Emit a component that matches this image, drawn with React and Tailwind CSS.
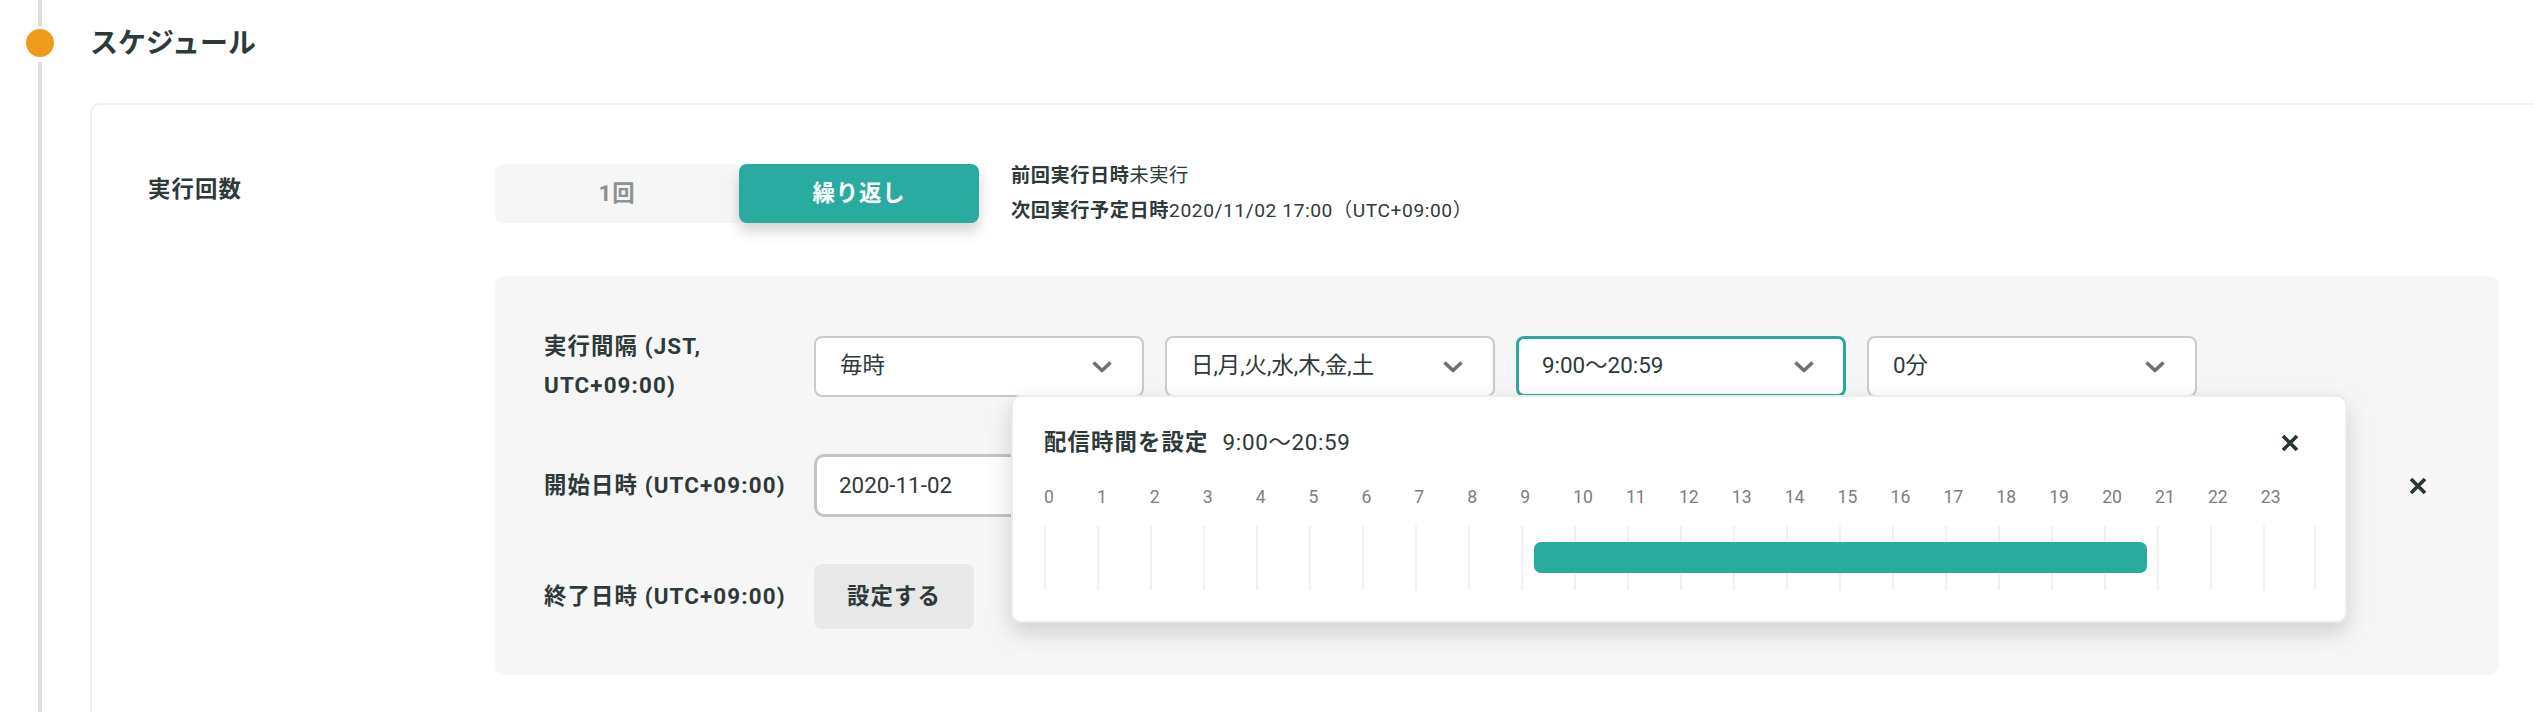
import React from "react";

function Chevron() {
  return (
    <svg width="22" height="13" viewBox="0 0 22 13" fill="none">
      <path d="M2.5 2.5l8.5 8 8.5-8" stroke="#697373" strokeWidth="3.6" strokeLinejoin="round" />
    </svg>
  );
}

function CloseIcon() {
  return (
    <svg width="20" height="20" viewBox="0 0 20 20" fill="none">
      <path d="M3 3l14 14M17 3L3 17" stroke="#2b3535" strokeWidth="3.6" />
    </svg>
  );
}

function Select({ value, active }) {
  return (
    <div
      className={
        active
          ? "w-[330px] h-[61px] bg-white rounded-[8px] border-[3px] border-[#2aab9f] flex items-center justify-between pl-[23px] pr-[28px]"
          : "w-[330px] h-[61px] bg-white rounded-[8px] border-2 border-[#cacaca] flex items-center justify-between pl-[24px] pr-[29px]"
      }
    >
      <span className="text-[22.4px]">{value}</span>
      <Chevron />
    </div>
  );
}

function HourPicker({ start, end }) {
  const hours = Array.from({ length: 24 }, (_, i) => i);
  return (
    <div className="absolute left-[516px] top-[119px] w-[1336px] h-[228px] bg-white border-2 border-[#ececec] rounded-[10px] shadow-[0_10px_24px_rgba(0,0,0,0.16)] pl-[31px] pt-[30px]">
      <div className="flex items-center justify-between pr-[45px] h-[32px]">
        <div className="flex items-center">
          <span className="text-[22.4px] font-bold tracking-[0.05em]">配信時間を設定</span>
          <span className="text-[22.4px] ml-[14px] tracking-[0.03em]">9:00〜20:59</span>
        </div>
        <CloseIcon />
      </div>
      <div className="flex w-[1270px] mt-[26px] h-[24px] leading-[24px]">
        {hours.map((h) => (
          <div key={h} className="w-[calc(100%/24)] text-[17.6px] text-[#7b8080]">
            {h}
          </div>
        ))}
      </div>
      <div className="relative flex w-[1272px] h-[64px] mt-[17px]">
        {hours.map((h) => (
          <div
            key={h}
            className={
              h === 23
                ? "w-[calc(100%/24)] h-full border-l-2 border-r-2 border-[#f0f0f0]"
                : "w-[calc(100%/24)] h-full border-l-2 border-[#f0f0f0]"
            }
          />
        ))}
        <div
          className="absolute top-[16px] h-[31px] rounded-[7px] bg-[#2aab9f]"
          style={{
            left: `calc(${(start / 24) * 100}% + 13px)`,
            width: `calc(${((end - start) / 24) * 100}% - 23px)`,
          }}
        />
      </div>
    </div>
  );
}

export default function App() {
  return (
    <div className="min-h-[712px] bg-white flex text-[#2e3939] font-['Roboto','Noto_Sans_CJK_JP',sans-serif] overflow-hidden">
      {/* timeline rail */}
      <div className="w-[79px] shrink-0 flex flex-col items-center">
        <div className="w-[4px] h-[26px] bg-[#dcdcdc]" />
        <div className="w-[28px] h-[28px] rounded-full bg-[#f09a1c] mt-[3px] mb-[5px]" />
        <div className="w-[4px] flex-1 bg-[#dcdcdc]" />
      </div>

      <div className="flex-1 pl-[11px]">
        <div className="h-[87px] flex items-center text-[28px] font-bold">スケジュール</div>

        <div className="mt-[16px] border-t-2 border-l-2 border-[#efefef] rounded-tl-[10px] pl-[56px] pt-[59px] min-h-[620px]">
          {/* run count */}
          <div className="flex items-start h-[59px]">
            <div className="w-[347px] text-[22.4px] font-bold leading-[32px] mt-[9px] tracking-[0.05em]">実行回数</div>
            <div className="flex h-[59px] rounded-[8px] bg-[#f6f6f6] tracking-[0.05em]">
              <div className="w-[244px] flex items-center justify-center text-[22.4px] font-bold text-[#8c9191]">1回</div>
              <div className="w-[240px] flex items-center justify-center text-[22.4px] font-bold text-white bg-[#2aab9f] rounded-[8px] shadow-[0_8px_14px_rgba(0,0,0,0.18)]">
                繰り返し
              </div>
            </div>
            <div className="ml-[32px] -mt-[6px] text-[19.2px] leading-[35px] tracking-[0.03em]">
              <div>
                <span className="font-bold">前回実行日時</span>未実行
              </div>
              <div>
                <span className="font-bold">次回実行予定日時</span>2020/11/02 17:00（UTC+09:00）
              </div>
            </div>
          </div>

          {/* repeat settings */}
          <div className="relative ml-[347px] mt-[53px] w-[2004px] bg-[#f6f6f6] rounded-[10px] pl-[49px] pt-[51px] pb-[46px]">
            <div className="flex items-center">
              <div className="w-[270px] text-[22.4px] font-bold leading-[39px] tracking-[0.05em]">
                実行間隔 (JST,
                <br />
                UTC+09:00)
              </div>
              <div className="flex gap-[21px]">
                <Select value="毎時" />
                <Select value="日,月,火,水,木,金,土" />
                <Select value="9:00〜20:59" active />
                <Select value="0分" />
              </div>
            </div>

            <div className="flex items-center mt-[49px]">
              <div className="w-[270px] text-[22.4px] font-bold tracking-[0.05em]">開始日時 (UTC+09:00)</div>
              <div className="w-[330px] h-[63px] bg-white rounded-[10px] border-[3px] border-[#c4c4c4] flex items-center pl-[22px] text-[22.4px]">
                2020-11-02
              </div>
              <div className="ml-auto mr-[71px]">
                <CloseIcon />
              </div>
            </div>

            <div className="flex items-center mt-[47px]">
              <div className="w-[270px] text-[22.4px] font-bold tracking-[0.05em]">終了日時 (UTC+09:00)</div>
              <div className="w-[160px] h-[65px] bg-[#e8e8e8] rounded-[8px] flex items-center justify-center text-[22.4px] font-bold tracking-[0.05em]">
                設定する
              </div>
            </div>

            <HourPicker start={9} end={21} />
          </div>
        </div>
      </div>
    </div>
  );
}
